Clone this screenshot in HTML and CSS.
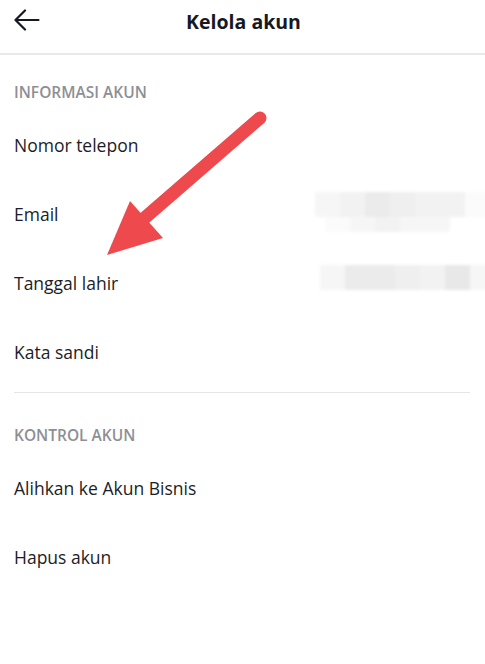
FILE: index.html
```html
<!DOCTYPE html>
<html lang="id">
<head>
<meta charset="utf-8">
<title>Kelola akun</title>
<link rel="stylesheet" href="styles.css">
</head>
<body>
<div class="screen">
  <header class="topbar">
    <button class="back" aria-label="Kembali">
      <svg width="26" height="24" viewBox="0 0 26 24"><path d="M11 1.5 L1.5 11 L11 20.5 M1.5 11 H24.5" fill="none" stroke="#161823" stroke-width="2.2" stroke-linecap="round" stroke-linejoin="round"/></svg>
    </button>
    <h1 class="title">Kelola akun</h1>
  </header>

  <section class="group first">
    <h2 class="group-title">INFORMASI AKUN</h2>
    <div class="row"><span>Nomor telepon</span></div>
    <div class="row"><span>Email</span>
      <span class="blur blur-email">
        <span class="strip"><i class="c1"></i><i class="c2"></i><i class="c4"></i><i class="c3"></i><i class="c2"></i><i class="c2"></i><i class="c0"></i></span>
        <span class="strip low"><i class="c0"></i><i class="c1"></i><i class="c2"></i><i class="c1"></i><i class="c1"></i></span>
      </span>
    </div>
    <div class="row"><span>Tanggal lahir</span>
      <span class="blur blur-date">
        <span class="strip"><i class="c1"></i><i class="c4"></i><i class="c4"></i><i class="c3"></i><i class="c2"></i><i class="c5"></i><i class="c1"></i></span>
      </span>
    </div>
    <div class="row"><span>Kata sandi</span></div>
  </section>

  <hr class="divider">

  <section class="group second">
    <h2 class="group-title">KONTROL AKUN</h2>
    <div class="row"><span>Alihkan ke Akun Bisnis</span></div>
    <div class="row"><span>Hapus akun</span></div>
  </section>

  <svg class="annot" width="485" height="664" viewBox="0 0 485 664">
    <line x1="260" y1="118" x2="140" y2="222" stroke="#ee4a4d" stroke-width="13" stroke-linecap="round"/>
    <polygon points="107,255 130,201 163,238" fill="#ee4a4d"/>
  </svg>
</div>
</body>
</html>
```

FILE: styles.css
```css
* { box-sizing: border-box; }
html, body { margin: 0; padding: 0; background: #fff; }
body {
  font-family: "Open Sans", "Liberation Sans", sans-serif;
  color: #161823;
}
.screen {
  position: relative;
  width: 485px;
  height: 664px;
  overflow: hidden;
}
.topbar {
  height: 55px;
  border-bottom: 2px solid #e9e9ea;
  display: flex;
  align-items: center;
  justify-content: center;
  position: relative;
  padding-bottom: 10px;
}
.back {
  position: absolute;
  left: 14px;
  top: 9px;
  border: 0;
  background: none;
  padding: 0;
  width: 26px;
  height: 24px;
}
.title {
  margin: 0;
  font-size: 19.5px;
  font-weight: 700;
  letter-spacing: 0;
  padding-left: 2px;
}
.group-title {
  margin: 0;
  height: 20px;
  line-height: 20px;
  font-size: 15.5px;
  font-weight: 600;
  color: #8e8f95;
  padding-left: 14px;
  margin-bottom: 8px;
}
.first { padding-top: 27px; }
.second { padding-top: 32px; }
.row {
  height: 69px;
  display: flex;
  align-items: center;
  justify-content: space-between;
  padding-left: 14px;
  font-size: 17.5px;
  color: #1c1d26;
}
.divider {
  margin: 6px 15px 0 14px;
  border: 0;
  border-top: 1.5px solid #e6e6e7;
  height: 0;
}
.blur {
  display: flex;
  flex-direction: column;
  align-self: flex-start;
  filter: blur(1.6px);
  margin-right: -5px;
}
.strip { display: flex; height: 25px; }
.strip i { display: block; width: 25px; height: 100%; }
.strip.low { height: 15px; padding-left: 10px; }
.blur-email { margin-top: 13px; }
.blur-date { margin-top: 17px; margin-right: -10px; }
.c0 { background: #fbfbfb; }
.c1 { background: #f6f6f6; }
.c2 { background: #f2f2f2; }
.c3 { background: #efefef; }
.c4 { background: #ebebeb; }
.c5 { background: #e8e8e8; }
.annot {
  position: absolute;
  left: 0;
  top: 0;
  pointer-events: none;
}
```
